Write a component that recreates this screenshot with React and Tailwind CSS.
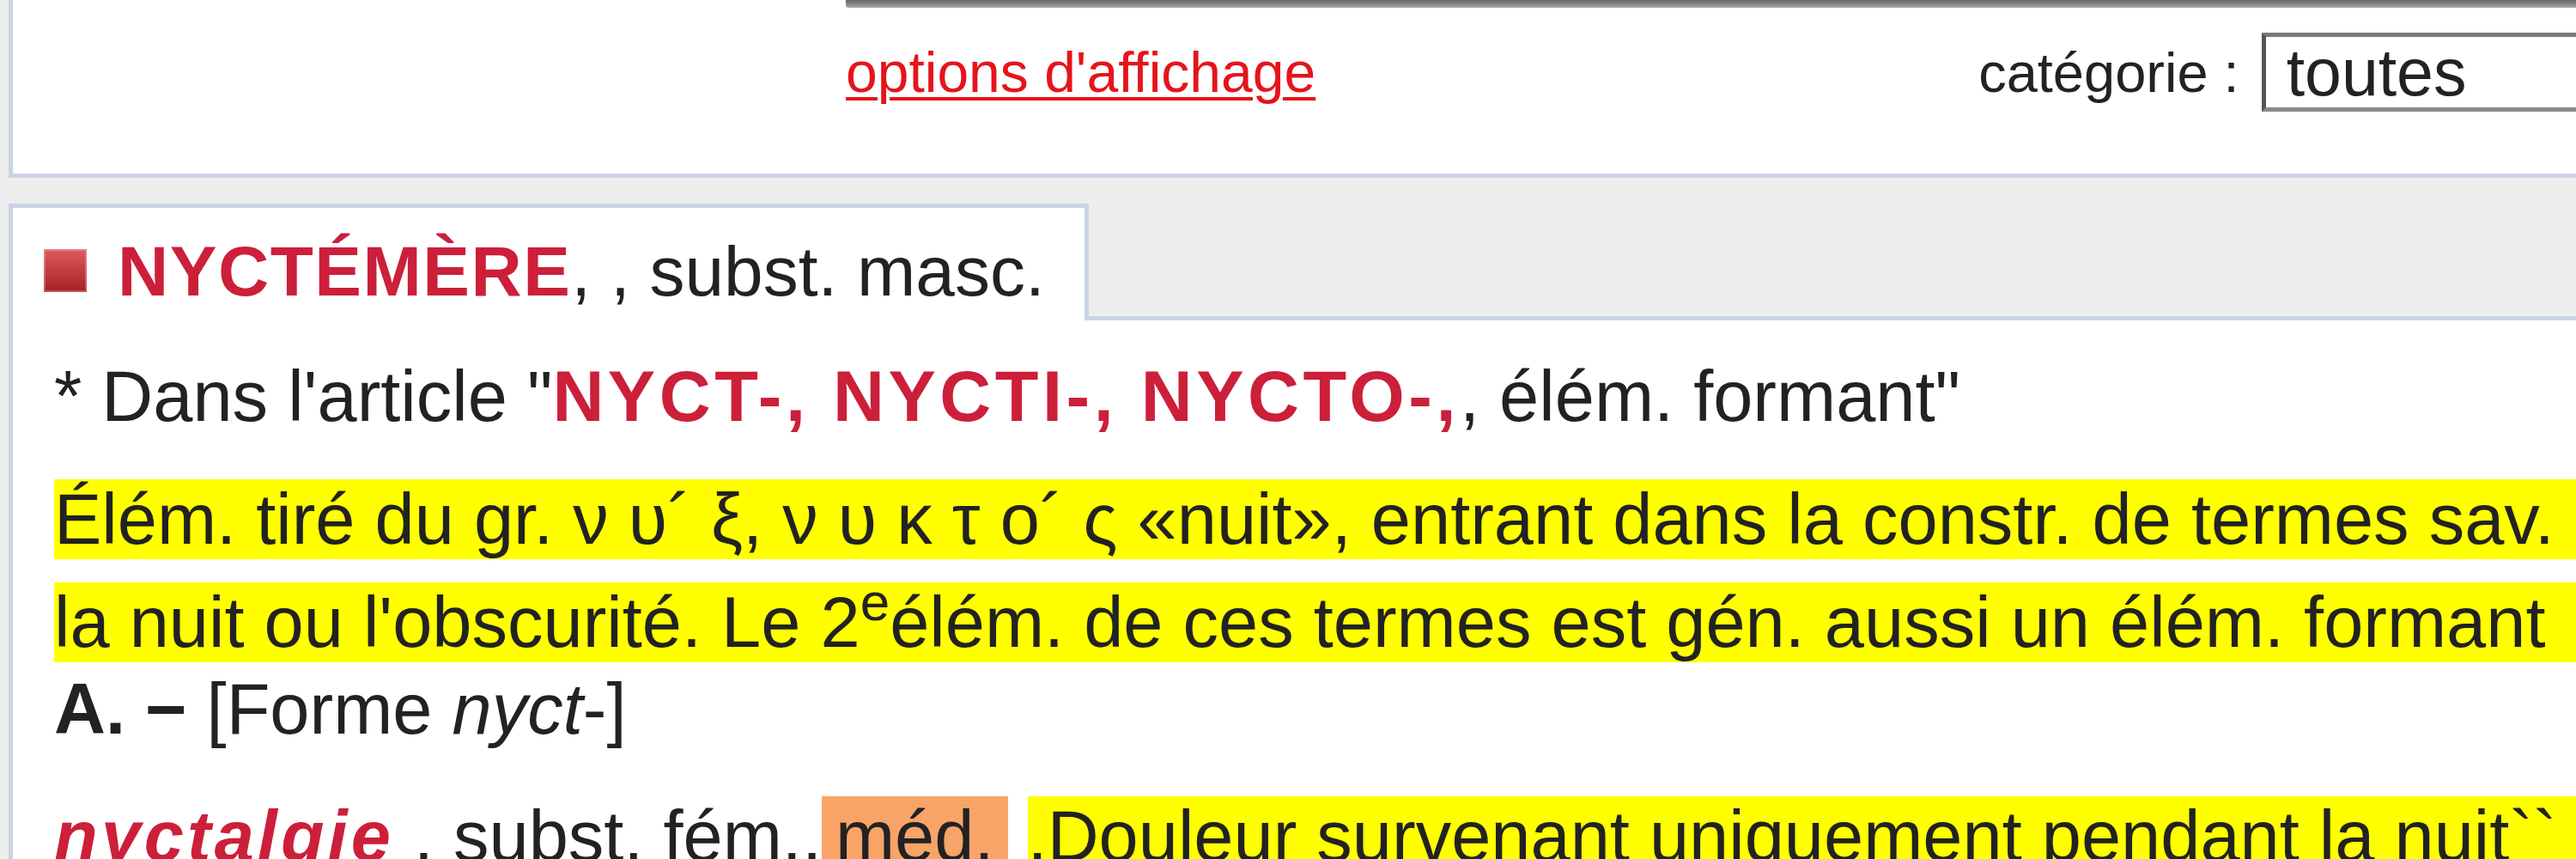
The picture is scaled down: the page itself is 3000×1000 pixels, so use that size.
import React from 'react';

const App = () => {
    return (
        <div className="w-[3000px] h-[1000px] overflow-hidden bg-[#eeeeee] font-['Liberation_Sans',Arial,sans-serif] text-[#222222]">
            {/* bandeau de recherche */}
            <div className="h-[207px] ml-[10px] bg-white border-l-[5px] border-b-[5px] border-[#c9d3e6]">
                <div className="ml-[970px] h-[9px] rounded-bl-[3px] bg-gradient-to-b from-[#666666] to-[#a8a8a8]" />
                <div className="flex items-center h-[160px] -mt-[5px]">
                    <a className="ml-[970px] text-[66px] leading-[75px] text-[#e5141b] underline decoration-[4px] underline-offset-[6px] whitespace-nowrap">
                        options d'affichage
                    </a>
                    <span className="ml-[772px] text-[65px] leading-[75px] whitespace-nowrap">catégorie :</span>
                    <div className="ml-[26px] flex-1 h-[92px] flex items-center bg-white border-[5px] border-t-[#7a7a7a] border-l-[#555555] border-b-[#8a8a8a] border-r-0">
                        <span className="pl-[24px] text-[77px] leading-[80px] whitespace-nowrap">toutes</span>
                    </div>
                </div>
            </div>

            {/* onglet */}
            <div className="flex mt-[30px] ml-[10px]">
                <div className="w-[1258px] h-[136px] bg-white border-t-[5px] border-l-[5px] border-r-[5px] border-[#c9d3e6] flex items-center pt-[15px]">
                    <span className="ml-[36px] w-[50px] h-[50px] bg-gradient-to-b from-[#de5a5a] to-[#a31f22] shadow-[inset_0_0_0_2px_rgba(255,255,255,0.25)]" />
                    <span className="ml-[36px] text-[82px] leading-[95px] whitespace-nowrap">
                        <b className="text-[#cc1f3a] tracking-[1.5px]">NYCTÉMÈRE</b>, , subst. masc.
                    </span>
                </div>
                <div className="flex-1 border-b-[5px] border-[#c9d3e6]" />
            </div>

            {/* article */}
            <div className="ml-[10px] h-[700px] bg-white border-l-[5px] border-[#c9d3e6] pl-[48px] pt-[41px] text-[83px]">
                <div className="leading-[95px] h-[95px] whitespace-nowrap">
                    * Dans l'article "<b className="text-[#cc1f3a] tracking-[4.5px]">NYCT-, NYCTI-, NYCTO-,</b>, élém. formant"
                </div>
                <div className="mt-[36px] leading-[120px] h-[120px] whitespace-nowrap">
                    <span className="bg-[#ffff00] pr-[400px]">
                        Élém. tiré du gr. ν υ´ ξ, ν υ κ τ ο´ ς «nuit», entrant dans la constr. de termes sav.
                    </span>
                </div>
                <div className="leading-[120px] h-[120px] whitespace-nowrap">
                    <span className="bg-[#ffff00] pr-[400px]">
                        la nuit ou l'obscurité. Le 2<sup className="text-[62px]">e</sup>élém. de ces termes est gén. aussi un élém. formant
                    </span>
                </div>
                <div className="-mt-[7px] leading-[95px] h-[95px] whitespace-nowrap">
                    <b>A. −</b> [Forme <i>nyct</i>-]
                </div>
                <div className="mt-[53px] leading-[95px] whitespace-nowrap">
                    <b className="italic text-[#cc1f3a] tracking-[4px]">nyctalgie</b> , subst. fém.,
                    <span className="bg-[#f8a468] px-[16px]">méd.</span>{' '}
                    <span className="bg-[#ffff00] pr-[400px]">,Douleur survenant uniquement pendant la nuit``</span>
                </div>
            </div>
        </div>
    );
};

export default App;
